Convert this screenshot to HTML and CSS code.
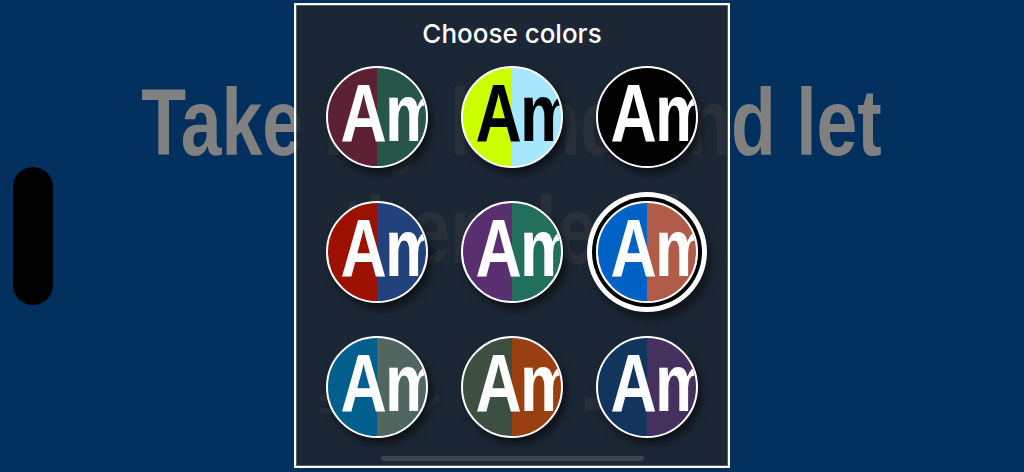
FILE: index.html
```html
<!DOCTYPE html>
<html lang="en">
<head>
<meta charset="utf-8">
<title>Choose colors</title>
<link rel="stylesheet" href="styles.css">
</head>
<body>
<main class="page">
  <h2 class="headline"><span class="headline-line">Take my hand and let</span><span class="headline-line">them lead</span></h2>
  <div class="toolbar">
    <span class="tool tool-lines"><i></i><i></i></span>
    <span class="tool tool-pen"></span>
    <span class="tool tool-box"></span>
  </div>
</main>
<div class="handle"></div>
<section class="sheet">
  <h1 class="sheet-title">Choose colors</h1>
  <div class="swatches">
    <div class="swatch s1"><span class="am">Am</span></div>
    <div class="swatch s2"><span class="am">Am</span></div>
    <div class="swatch s3"><span class="am">Am</span></div>
    <div class="swatch s4"><span class="am">Am</span></div>
    <div class="swatch s5"><span class="am">Am</span></div>
    <div class="swatch s6 selected"><span class="am">Am</span></div>
    <div class="swatch s7"><span class="am">Am</span></div>
    <div class="swatch s8"><span class="am">Am</span></div>
    <div class="swatch s9"><span class="am">Am</span></div>
  </div>
  <div class="home-bar"></div>
</section>
</body>
</html>
```
FILE: styles.css
```css
html, body {
  margin: 0;
  padding: 0;
}
body {
  width: 1024px;
  height: 472px;
  background: #01305f;
  overflow: hidden;
  position: relative;
  font-family: "Inter", "Noto Sans", sans-serif;
}
.page {
  display: flex;
  flex-direction: column;
  align-items: center;
  padding-top: 68px;
}
.headline {
  margin: 0;
  display: flex;
  flex-direction: column;
  align-items: center;
  font-family: "Liberation Sans Narrow", "Liberation Sans", sans-serif;
  font-weight: 700;
  font-size: 95px;
  line-height: 108px;
  color: #808080;
  transform: scaleX(0.772);
  white-space: nowrap;
}
.toolbar {
  align-self: flex-start;
  display: flex;
  align-items: center;
  margin: 108px 0 0 320px;
}
.tool {
  display: block;
  background: #7a7a7a;
}
.tool-lines {
  background: none;
  display: flex;
  flex-direction: column;
  gap: 7px;
  width: 26px;
}
.tool-lines i {
  display: block;
  height: 6px;
  border-radius: 3px;
  background: #7a7a7a;
}
.tool-pen {
  margin-left: 82px;
  width: 6px;
  height: 24px;
  border-radius: 3px;
  transform: rotate(40deg);
}
.tool-box {
  margin-left: 151px;
  width: 16px;
  height: 12px;
  border-radius: 2px;
}
.handle {
  position: absolute;
  left: 13px;
  top: 167px;
  width: 40px;
  height: 138px;
  border-radius: 20px;
  background: #000;
}
.sheet {
  position: absolute;
  left: 294px;
  top: 3px;
  width: 436px;
  height: 465px;
  box-sizing: border-box;
  border: 2px solid #fff;
  background: rgba(31, 39, 49, 0.9);
  box-shadow: inset 0 0 0 1px rgba(255, 255, 255, 0.25);
  display: flex;
  flex-direction: column;
  align-items: center;
  padding-top: 13px;
}
.sheet-title {
  margin: 0;
  font-family: "Inter", "Noto Sans", sans-serif;
  font-size: 26px;
  font-weight: 500;
  line-height: 31px;
  color: #fff;
}
.swatches {
  margin-top: 17px;
  display: grid;
  grid-template-columns: repeat(3, 102px);
  grid-auto-rows: 102px;
  gap: 33px;
}
.swatch {
  width: 102px;
  height: 102px;
  box-sizing: border-box;
  border: 2px solid #fff;
  border-radius: 50%;
  overflow: hidden;
  background: linear-gradient(90deg, var(--l) 50%, var(--r) 50%);
  box-shadow: 4px 6px 9px rgba(0, 0, 0, 0.55);
  color: #fff;
}
.swatch.selected {
  box-shadow: 0 0 0 4px #000, 0 0 0 9px #fff, 5px 8px 10px 9px rgba(0, 0, 0, 0.45);
}
.am {
  display: block;
  padding: 4px 0 0 16px;
  font-family: "Liberation Sans Narrow", "Liberation Sans", sans-serif;
  font-weight: 700;
  font-size: 82px;
  line-height: 82px;
  letter-spacing: -2px;
  white-space: nowrap;
  transform: scaleX(0.78);
  transform-origin: 0 0;
}
.s1 { --l: #5c2132; --r: #27554a; }
.s2 { --l: #ccff00; --r: #a7e7ff; color: #000; }
.s3 { --l: #000; --r: #000; }
.s4 { --l: #9c1100; --r: #22427b; }
.s5 { --l: #5a2f70; --r: #22705b; }
.s6 { --l: #0062c4; --r: #b05c48; }
.s7 { --l: #005f8c; --r: #4f6760; }
.s8 { --l: #3c4f40; --r: #9a3f11; }
.s9 { --l: #11355d; --r: #45305e; }
.home-bar {
  margin-top: 18px;
  width: 263px;
  height: 5px;
  border-radius: 3px;
  background: #3b444f;
}
```
